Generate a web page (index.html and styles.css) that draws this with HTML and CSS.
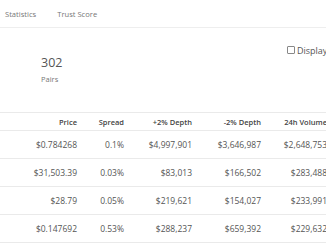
FILE: index.html
```html
<!DOCTYPE html>
<html>
<head>
<meta charset="utf-8">
<link rel="stylesheet" href="styles.css">
</head>
<body>
<div class="page">
  <nav class="tabs">
    <span class="tab">Statistics</span>
    <span class="tab">Trust Score</span>
  </nav>
  <section class="summary">
    <div class="stat">
      <div class="stat-value">302</div>
      <div class="stat-label">Pairs</div>
    </div>
    <label class="display">
      <span class="box"></span>
      <span class="display-text">Display in BTC</span>
    </label>
  </section>
  <table class="markets">
    <colgroup>
      <col class="c-price"><col class="c-spread"><col class="c-up"><col class="c-down"><col class="c-vol">
    </colgroup>
    <thead>
      <tr><th>Price</th><th>Spread</th><th>+2% Depth</th><th>-2% Depth</th><th>24h Volume</th></tr>
    </thead>
    <tbody>
      <tr><td>$0.784268</td><td>0.1%</td><td>$4,997,901</td><td>$3,646,987</td><td>$2,648,753</td></tr>
      <tr><td>$31,503.39</td><td>0.03%</td><td>$83,013</td><td>$166,502</td><td>$283,488</td></tr>
      <tr><td>$28.79</td><td>0.05%</td><td>$219,621</td><td>$154,027</td><td>$233,991</td></tr>
      <tr><td>$0.147692</td><td>0.53%</td><td>$288,237</td><td>$659,392</td><td>$229,632</td></tr>
    </tbody>
  </table>
</div>
</body>
</html>
```

FILE: styles.css
```css
html, body {
  margin: 0;
  padding: 0;
  background: #fff;
  overflow: hidden;
}
body {
  font-family: "Open Sans", "Noto Sans", sans-serif;
  color: #555;
}
.page {
  width: 420px;
}
.tabs {
  display: flex;
  align-items: center;
  gap: 21px;
  height: 27px;
  padding-left: 5px;
  border-bottom: 1px solid #eeeeee;
  width: 321px;
}
.tab {
  font-size: 7.6px;
  color: #777;
}
.summary {
  display: grid;
  grid-template-columns: 287px auto;
  height: 84px;
  padding-top: 16px;
  box-sizing: border-box;
}
.stat {
  padding-left: 41px;
  margin-top: 11px;
}
.stat-value {
  font-size: 12.5px;
  line-height: 16px;
  color: #555;
}
.stat-label {
  font-size: 7.5px;
  line-height: 11px;
  margin-top: 3px;
  color: #777;
}
.display {
  display: flex;
  align-items: center;
  gap: 2px;
  height: 12px;
  white-space: nowrap;
}
.box {
  width: 6px;
  height: 6px;
  border: 1px solid #888;
  border-radius: 1px;
}
.display-text {
  font-size: 9px;
  color: #555;
}
.markets {
  border-collapse: collapse;
  table-layout: fixed;
  width: 335px;
}
.c-price { width: 85px; }
.c-spread { width: 47px; }
.c-up { width: 68px; }
.c-down { width: 69px; }
.c-vol { width: 66px; }
.markets th, .markets td {
  text-align: right;
  padding: 0 8px 0 0;
  white-space: nowrap;
}
.markets th {
  font-size: 7.5px;
  font-weight: 600;
  color: #444;
  height: 17px;
  border-top: 1px solid #eaeaea;
  border-bottom: 1px solid #eaeaea;
}
.markets td {
  font-size: 8.5px;
  color: #555;
  height: 27px;
  border-bottom: 1px solid #eaeaea;
}
```
